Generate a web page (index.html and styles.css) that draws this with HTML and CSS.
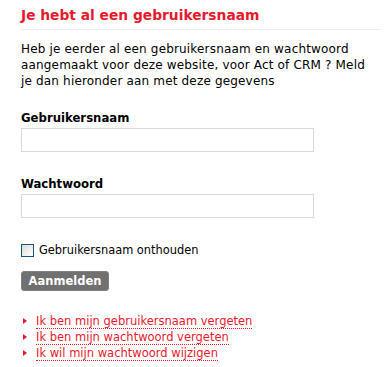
FILE: index.html
```html
<!DOCTYPE html>
<html lang="nl">
<head>
<meta charset="UTF-8" />
<title>Aanmelden</title>
<link rel="stylesheet" href="styles.css">
</head>
<body>

<div class="login">
  <h1>Je hebt al een gebruikersnaam</h1>

  <p class="intro">Heb je eerder al een gebruikersnaam en wachtwoord aangemaakt voor deze website, voor Act of CRM ? Meld je dan hieronder aan met deze gegevens</p>

  <label class="field-label" for="gebruikersnaam">Gebruikersnaam</label>
  <input class="field" type="text" id="gebruikersnaam" autofocus />

  <label class="field-label second" for="wachtwoord">Wachtwoord</label>
  <input class="field" type="password" id="wachtwoord" />

  <div class="remember">
    <input type="checkbox" id="onthouden" />
    <label for="onthouden">Gebruikersnaam onthouden</label>
  </div>

  <button class="btn">Aanmelden</button>

  <ul class="links">
    <li><a href="#">Ik ben mijn gebruikersnaam vergeten</a></li>
    <li><a href="#">Ik ben mijn wachtwoord vergeten</a></li>
    <li><a href="#">Ik wil mijn wachtwoord wijzigen</a></li>
  </ul>
</div>

</body>
</html>
```

FILE: styles.css
```css
body {
  margin: 0;
  background: #fff;
  font-family: "DejaVu Sans", Verdana, sans-serif;
  font-size: 12px;
  color: #000;
}
.login {
  width: 360px;
  padding: 6px 0 0 21px;
}
h1 {
  margin: 0;
  padding-bottom: 4px;
  font-size: 13.8px;
  line-height: 19px;
  color: #e8192c;
  border-bottom: 1px solid #eeeeee;
}
.intro {
  margin: 11px 0 0;
  padding-right: 8px;
  line-height: 16px;
  letter-spacing: 0.17px;
}
.field-label {
  display: block;
  margin-top: 21px;
  font-size: 11.7px;
  font-weight: bold;
  line-height: 16px;
}
.field-label.second {
  margin-top: 24px;
}
.field {
  display: block;
  width: 293px;
  height: 24px;
  margin-top: 2px;
  padding: 2px 4px;
  box-sizing: border-box;
  border: 1px solid #d9d9d9;
  font-family: inherit;
  font-size: 12px;
  outline: none;
}
.remember {
  display: flex;
  align-items: center;
  margin-top: 25px;
  height: 14px;
  font-size: 11.4px;
}
.remember input {
  appearance: none;
  width: 13px;
  height: 13px;
  margin: 0 5px 0 0;
  border: 1px solid #1c5180;
  background: linear-gradient(135deg, #dcdcd7, #ffffff);
}
.btn {
  display: block;
  margin-top: 14px;
  width: 88px;
  height: 20px;
  padding: 0;
  background: #707070;
  color: #fff;
  border: 1px solid #808080;
  border-radius: 3px;
  font-family: inherit;
  font-size: 11.5px;
  font-weight: bold;
  cursor: pointer;
}
.links {
  list-style: none;
  margin: 22px 0 0;
  padding: 0;
  font-size: 11.5px;
}
.links li {
  position: relative;
  padding-left: 15px;
  line-height: 16px;
}
.links li::before {
  content: "";
  position: absolute;
  left: 2px;
  top: 5px;
  border-left: 4px solid #e8192c;
  border-top: 3px solid transparent;
  border-bottom: 3px solid transparent;
}
.links a {
  color: #e8192c;
  text-decoration: none;
  border-bottom: 1px dotted #e8192c;
}
```
